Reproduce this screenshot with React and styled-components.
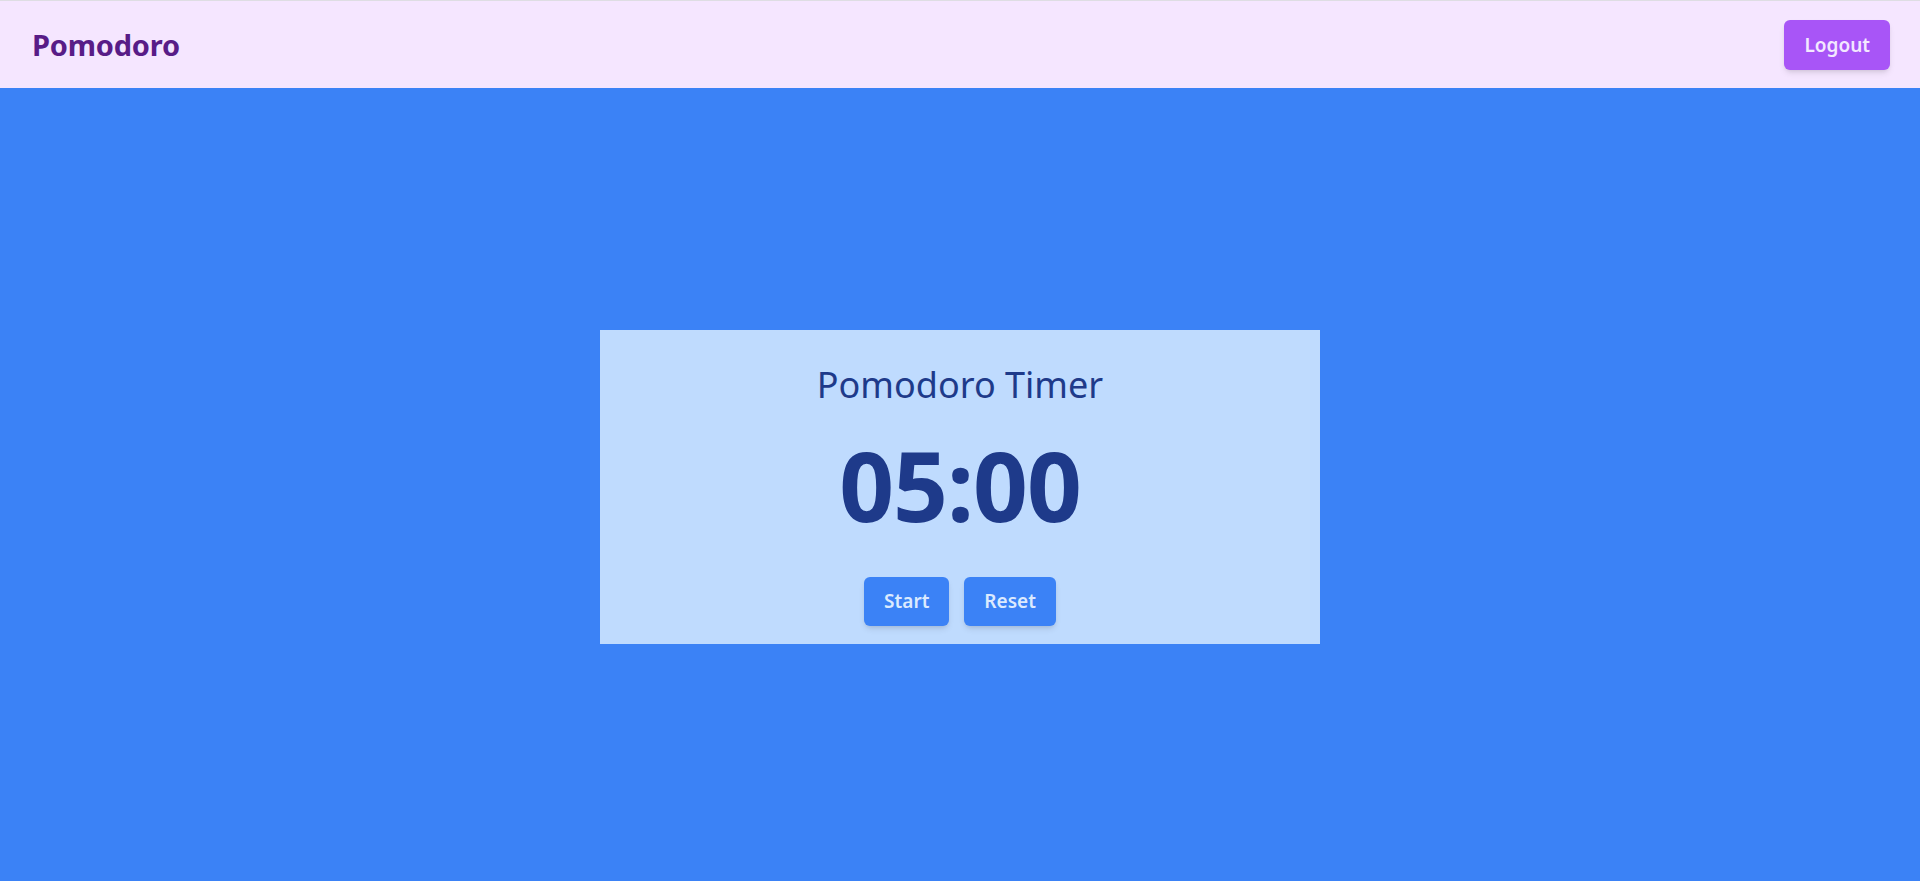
import React, { useState, useEffect } from 'react';
import styled, { createGlobalStyle } from 'styled-components';

const GlobalStyle = createGlobalStyle`
  * {
    box-sizing: border-box;
  }
  body {
    margin: 0;
    font-family: "Noto Sans", "Open Sans", sans-serif;
    background: #3b82f6;
  }
`;

const Page = styled.div`
  min-height: 881px;
  display: flex;
  flex-direction: column;
`;

const Header = styled.header`
  height: 88px;
  border-top: 1px solid #dedde3;
  background: #f5e6ff;
  display: flex;
  align-items: center;
  justify-content: space-between;
  padding: 0 30px 0 32px;
`;

const Brand = styled.h1`
  margin: 0;
  font-size: 29px;
  font-weight: 700;
  color: #581c87;
  letter-spacing: -0.2px;
`;

const Button = styled.button`
  height: ${(p) => p.$h || 49}px;
  padding: 0 20px;
  border: none;
  border-radius: 6px;
  font-family: inherit;
  font-size: 19px;
  font-weight: 600;
  cursor: pointer;
  background: ${(p) => (p.$purple ? '#a855f7' : '#3b82f6')};
  color: ${(p) => (p.$purple ? '#f3e8ff' : '#dbeafe')};
  box-shadow: 0 4px 6px -1px rgba(0, 0, 0, 0.1), 0 2px 4px -2px rgba(0, 0, 0, 0.1);
`;

const Main = styled.main`
  flex: 1;
  display: flex;
  align-items: center;
  justify-content: center;
  padding-top: 4px;
`;

const Card = styled.section`
  width: 720px;
  height: 314px;
  background: #bfdbfe;
  display: flex;
  flex-direction: column;
  align-items: center;
  padding-top: 35px;
`;

const Title = styled.h2`
  margin: 0;
  font-size: 36px;
  line-height: 40px;
  font-weight: 400;
  color: #1e3a8a;
`;

const Clock = styled.div`
  margin-top: 32px;
  font-size: 96px;
  line-height: 96px;
  font-weight: 700;
  color: #1e3a8a;
  letter-spacing: -1px;
`;

const Controls = styled.div`
  margin-top: 44px;
  display: flex;
  gap: 15px;
`;

export default function App() {
  const [seconds, setSeconds] = useState(300);
  const [running, setRunning] = useState(false);

  useEffect(() => {
    if (!running) return;
    const id = setInterval(() => setSeconds((s) => (s > 0 ? s - 1 : 0)), 1000);
    return () => clearInterval(id);
  }, [running]);

  const mm = String(Math.floor(seconds / 60)).padStart(2, '0');
  const ss = String(seconds % 60).padStart(2, '0');

  return (
    <Page>
      <GlobalStyle />
      <Header>
        <Brand>Pomodoro</Brand>
        <Button $purple $h={50}>Logout</Button>
      </Header>
      <Main>
        <Card>
          <Title>Pomodoro Timer</Title>
          <Clock>{mm}:{ss}</Clock>
          <Controls>
            <Button onClick={() => setRunning(!running)}>{running ? 'Pause' : 'Start'}</Button>
            <Button
              onClick={() => {
                setRunning(false);
                setSeconds(300);
              }}
            >
              Reset
            </Button>
          </Controls>
        </Card>
      </Main>
    </Page>
  );
}
